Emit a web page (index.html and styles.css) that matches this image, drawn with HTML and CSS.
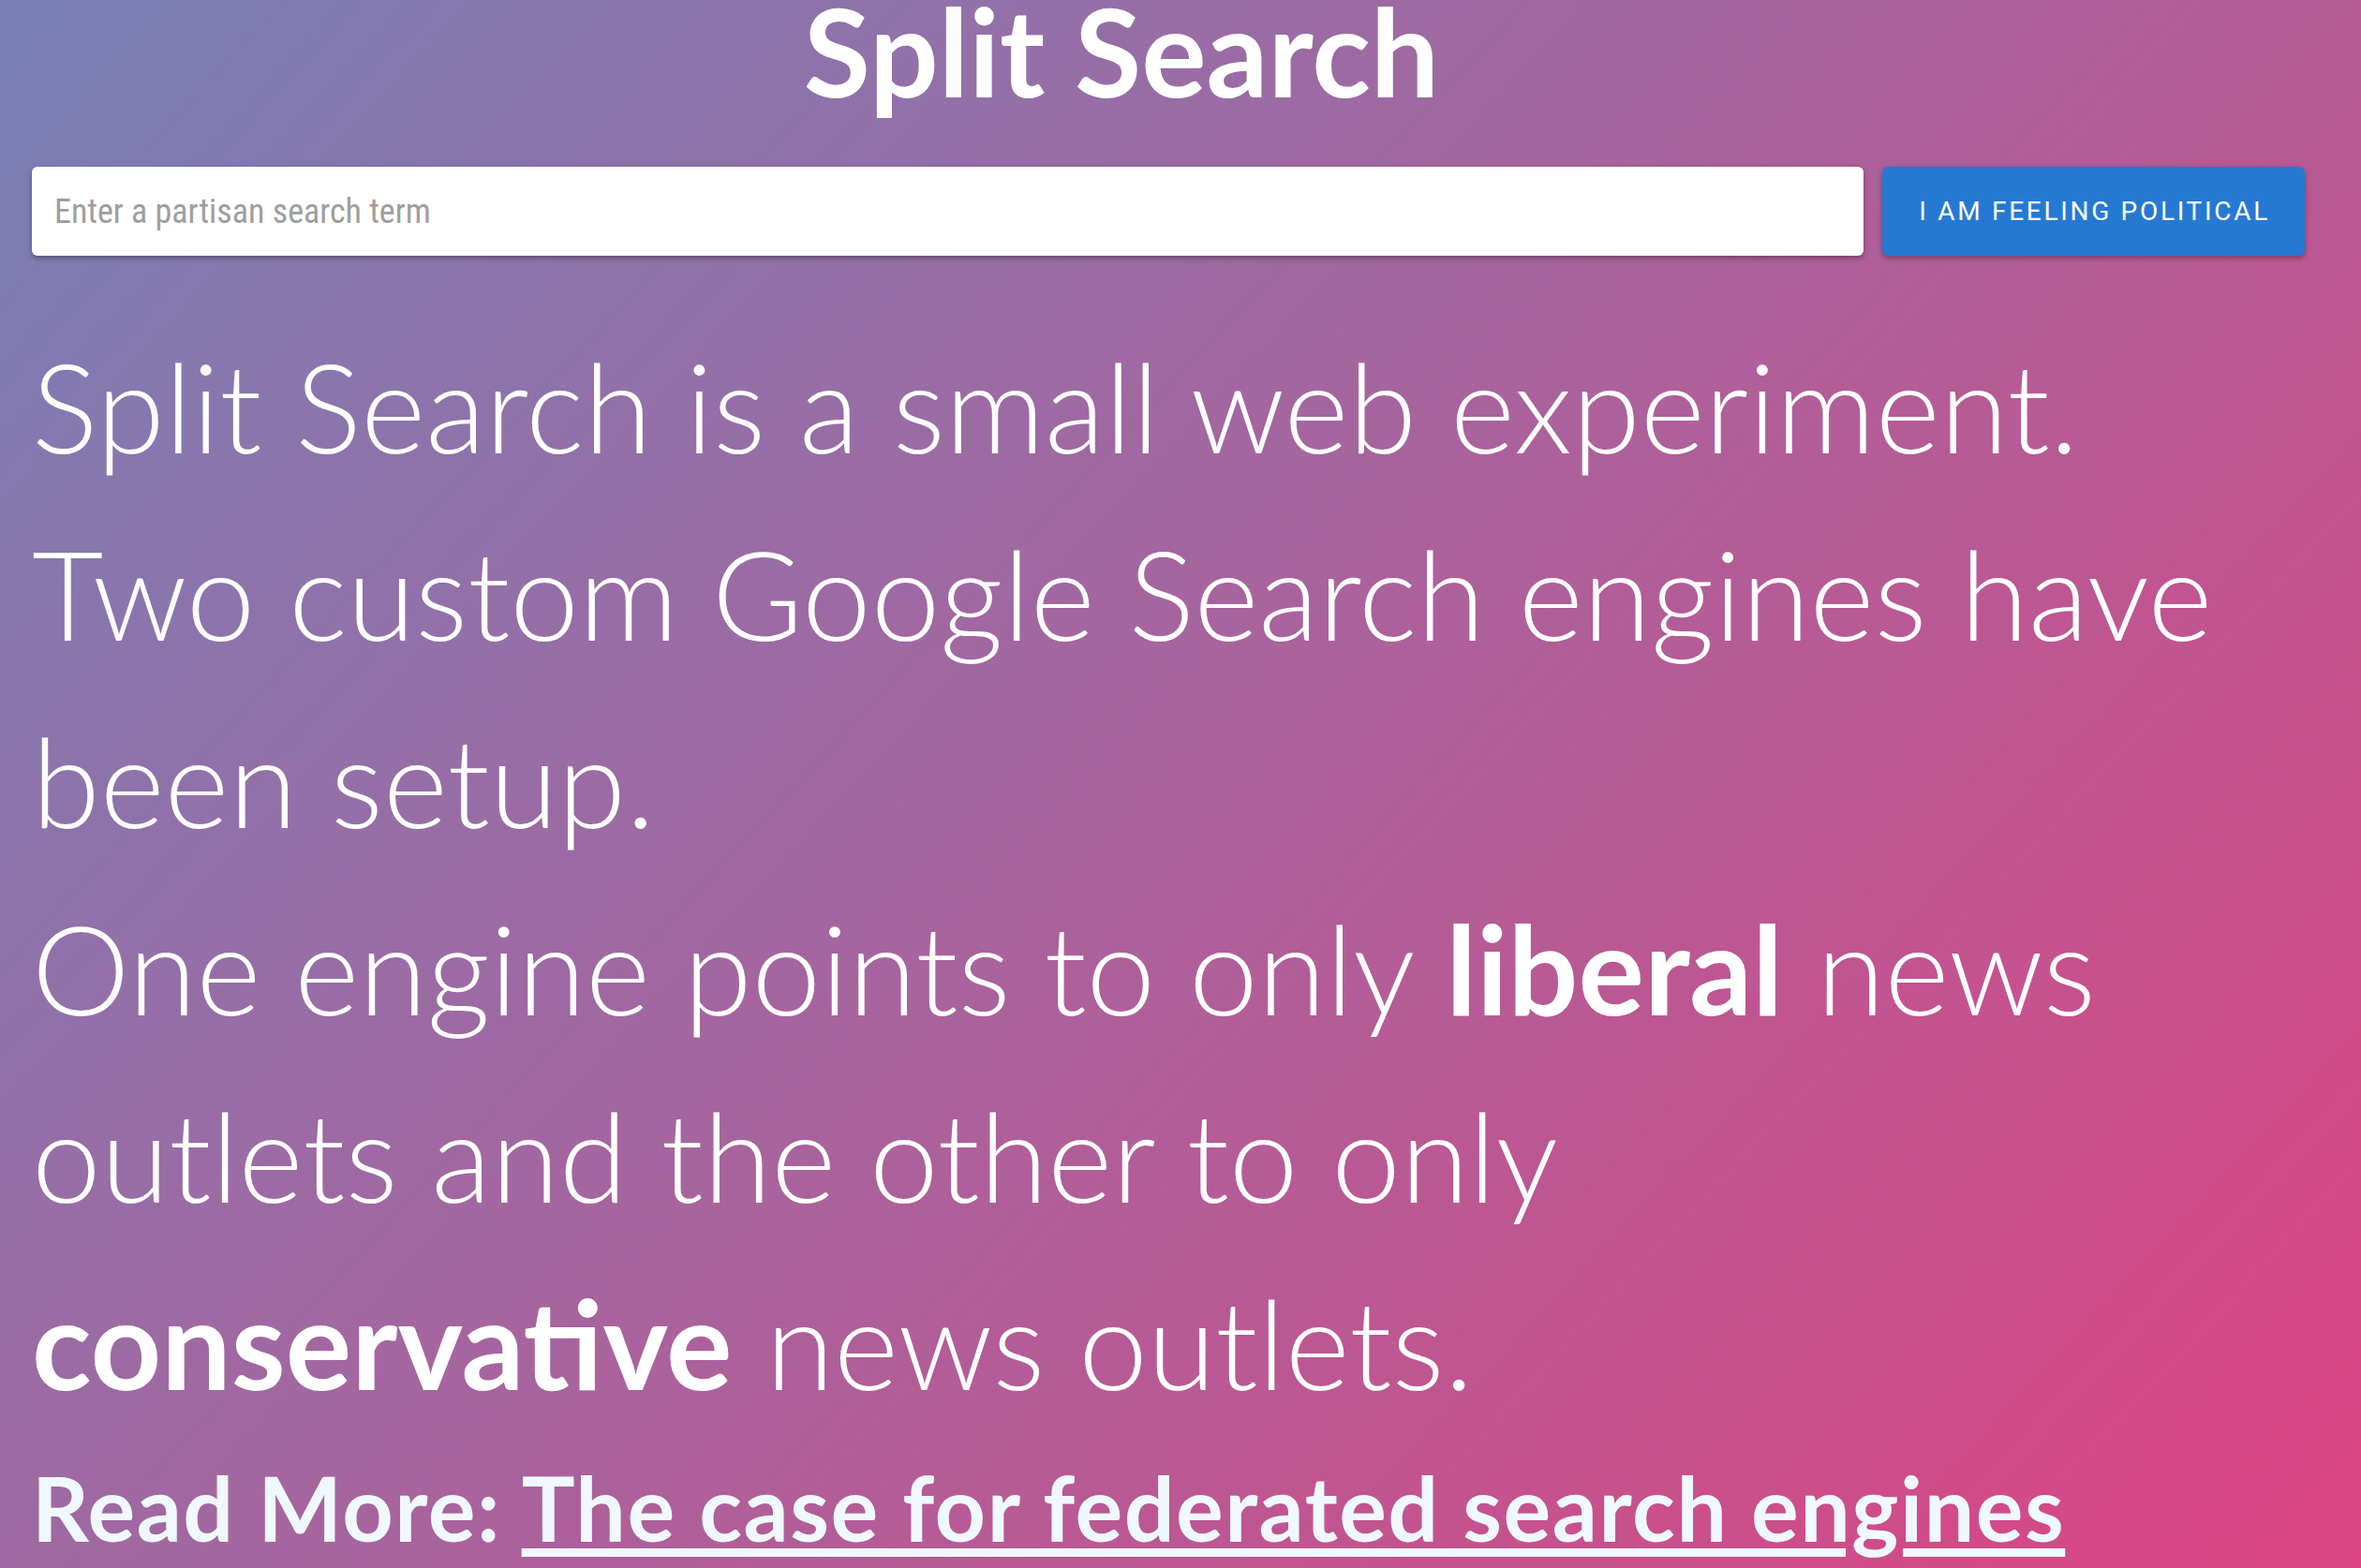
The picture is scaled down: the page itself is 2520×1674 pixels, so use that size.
FILE: index.html
```html
<!DOCTYPE html>
<html lang="en">
<head>
<meta charset="utf-8">
<title>Split Search</title>
<link rel="stylesheet" href="styles.css">
</head>
<body>
<main class="page">
  <h1 class="title">Split Search</h1>
  <form class="search">
    <input class="search-input" type="text" placeholder="Enter a partisan search term">
    <button class="search-btn" type="button">I am feeling political</button>
  </form>
  <div class="intro">
    <p>Split Search is a small web experiment.</p>
    <p>Two custom Google Search engines have<br>been setup.</p>
    <p>One engine points to only <strong>liberal</strong> news<br>outlets and the other to only<br><strong>conservative</strong> news outlets.</p>
  </div>
  <p class="read-more">Read More: <a href="#">The case for federated search engines</a></p>
</main>
</body>
</html>
```
FILE: styles.css
```css
html, body {
  margin: 0;
  padding: 0;
  overflow: hidden;
}

.page {
  box-sizing: border-box;
  height: 100vh;
  padding: 0 60px 0 34px;
  background: linear-gradient(133deg, #7880b6 0%, #dc4482 100%);
  font-family: Lato, "Open Sans", sans-serif;
  color: #ffffff;
}

.title {
  margin: 0 0 69px;
  padding-right: 100px;
  text-align: center;
  font-size: 130px;
  line-height: 0.84;
  font-weight: 700;
}

.search {
  display: flex;
  gap: 20px;
  height: 95px;
  margin: 0 0 60px;
}

.search-input {
  flex: 1;
  min-width: 0;
  box-sizing: border-box;
  height: 95px;
  border: none;
  border-radius: 6px;
  padding: 0 24px;
  background: #ffffff;
  box-shadow: 0 3px 4px rgba(0, 0, 0, 0.22), 0 1px 8px rgba(0, 0, 0, 0.12);
  font-family: "Roboto Condensed", Roboto, sans-serif;
  font-size: 36px;
  color: #333;
  outline: none;
}

.search-input::placeholder {
  color: #9e9e9e;
}

.search-btn {
  height: 95px;
  border: none;
  border-radius: 6px;
  padding: 0 37px 0 39px;
  background: #2679d3;
  box-shadow: 0 3px 4px rgba(0, 0, 0, 0.22), 0 1px 8px rgba(0, 0, 0, 0.12);
  color: #ffffff;
  font-family: Roboto, sans-serif;
  font-weight: 400;
  font-size: 28px;
  letter-spacing: 2.7px;
  text-transform: uppercase;
  cursor: pointer;
}

.intro p {
  margin: 0;
  font-size: 132px;
  line-height: 200px;
  font-weight: 300;
}

.intro strong {
  font-weight: 700;
}

.read-more {
  margin: 19px 0 0;
  font-size: 95px;
  line-height: 1.2;
  font-weight: 700;
  letter-spacing: 1.5px;
  color: #f0f8ff;
  white-space: nowrap;
}

.read-more a {
  color: #f0f8ff;
  text-decoration: underline;
  text-decoration-thickness: 9px;
  text-underline-offset: 7px;
}
```
